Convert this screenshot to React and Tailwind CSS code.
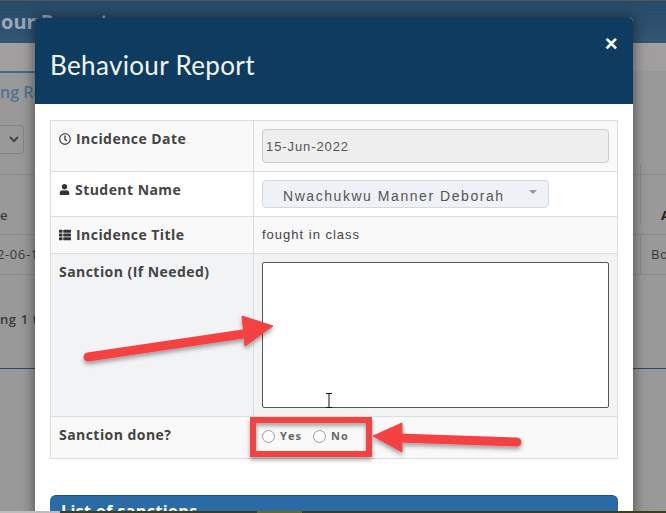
import { FaRegClock, FaUser, FaThList } from "react-icons/fa"

function Row({ label, icon, height, tone = "bg-[#f9f9f9]", children, last }) {
  return (
    <div className={`grid grid-cols-[203px_1fr] ${height} ${tone} ${last ? "" : "border-b border-[#ddd]"}`}>
      <div className="flex items-start gap-[5px] border-r border-[#ddd] pl-[8px] pt-[9px] text-[14px] font-bold leading-[18px] tracking-[0.45px] text-[#444]">
        {icon && <span className="mt-[3px] text-[#333]">{icon}</span>}
        {label}
      </div>
      <div className="pl-[8px]">{children}</div>
    </div>
  )
}

function Background() {
  return (
    <div className="flex h-full flex-col bg-[#999] text-[#3a3a3a]">
      <div className="h-px bg-[#555]" />
      <div className="flex h-[42px] items-center overflow-hidden bg-gradient-to-b from-[#264a69] to-[#335672] pl-[1px] text-[20px] font-bold text-[#9aa9b6] whitespace-nowrap">
        our Report
      </div>
      <div className="h-[28px] bg-[#a09e9e]" />
      <div className="h-[2px] w-[40px] bg-[#3d6a8e]" />
      <div className="h-[30px] overflow-hidden pl-0 pt-[10px] text-[16px] font-semibold leading-[18px] text-[#4f7391] whitespace-nowrap">
        ng Re
      </div>
      <div className="flex h-[72px] items-start border-b border-[#8a8a8a] pt-[22px]">
        <div className="flex h-[29px] w-[24px] items-center justify-end rounded-r border border-l-0 border-[#858585] pr-[4px]">
          <svg width="10" height="7" viewBox="0 0 10 7" fill="none" stroke="#444" strokeWidth="2">
            <path d="M1 1l4 4 4-4" />
          </svg>
        </div>
      </div>
      <div className="flex h-[60px] items-end justify-between border-b border-[#8a8a8a] pb-[10px] text-[13px] font-semibold leading-[18px]">
        <span>e</span>
        <span className="flex h-[59px] w-[26px] items-end border-l border-[#8a8a8a] pl-[20px] font-bold text-[#222]">A</span>
      </div>
      <div className="flex h-[40px] items-center justify-between border-b border-[#8a8a8a] text-[13px] tracking-[0.6px]">
        <span className="-ml-[3px]">2-06-1</span>
        <span className="flex h-full w-[26px] items-center overflow-hidden border-l border-[#8a8a8a] pl-[10px]">Bo</span>
      </div>
      <div className="h-[94px] border-b border-[#2e4a60] pt-[35px] text-[13px] font-semibold leading-[18px] tracking-[0.6px]">
        ng 1 t
      </div>
    </div>
  )
}

export default function App() {
  return (
    <div className="relative h-[513px] w-[666px] overflow-hidden font-['Open_Sans',sans-serif]">
      <Background />

      {/* Modal */}
      <div className="absolute left-[35px] top-[18px] h-[500px] w-[598px] rounded-t bg-white shadow-[0_0_14px_rgba(0,0,0,0.55)]">
        <div className="relative h-[86px] rounded-t bg-[#0e3c60] pl-[15px] pt-[31px] font-['Lato',sans-serif] text-[26px] leading-[33px] tracking-[0.35px] text-[#f2f6f9]">
          Behaviour Report
          <span className="absolute right-[15px] top-[13px] font-['Liberation_Sans',sans-serif] text-[22px] font-bold leading-[26px] text-white">×</span>
        </div>
        <div className="px-[15px] pt-[16px]">
          <div className="border border-[#ddd]">
            <Row label="Incidence Date" icon={<FaRegClock size={12} />} height="h-[51px]">
              <input
                readOnly
                value="15-Jun-2022"
                className="mt-[8px] h-[34px] w-[347px] rounded border border-[#ccc] bg-[#eee] px-[3px] font-['Liberation_Sans',sans-serif] text-[13px] tracking-[0.9px] text-[#555]"
              />
            </Row>
            <Row label="Student Name" icon={<FaUser size={11} />} height="h-[45px]" tone="bg-white">
              <div className="mt-[8px] flex h-[28px] w-[287px] items-center justify-between rounded border border-[#d2d7e0] bg-[#eef1f6] pl-[20px] pr-[11px] pt-[5px] font-['Liberation_Sans',sans-serif] text-[14px] tracking-[1.55px] text-[#555]">
                Nwachukwu Manner Deborah
                <span className="mb-[9px] h-0 w-0 border-x-[4px] border-t-[4px] border-x-transparent border-t-[#999]" />
              </div>
            </Row>
            <Row label="Incidence Title" icon={<FaThList size={12} />} height="h-[37px]">
              <div className="pt-[10px] font-['Liberation_Sans',sans-serif] text-[13px] leading-[16px] tracking-[1px] text-[#444]">
                fought in class
              </div>
            </Row>
            <Row label="Sanction (If Needed)" height="h-[163px]" tone="bg-[#f2f3f5]">
              <textarea className="mt-[8px] block h-[146px] w-[347px] resize-none rounded-[2px] border border-[#555] bg-white" />
            </Row>
            <Row label="Sanction done?" height="h-[41px]" last>
              <div className="flex items-center pt-[11px] text-[11px] font-bold leading-[16px] tracking-[1.05px] text-[#666]">
                <input type="radio" name="done" className="m-0 mr-[5px] h-[13px] w-[13px] opacity-70" />
                Yes
                <input type="radio" name="done" className="m-0 ml-[11px] mr-[5px] h-[13px] w-[13px] opacity-70" />
                No
              </div>
            </Row>
          </div>
          <div className="mt-[36px] h-[40px] rounded-t-md border-t border-[#1d4f7d] bg-[#2a6aa5] pl-[11px] pt-[4px] text-[16px] font-bold leading-[22px] tracking-[0.4px] text-white">
            List of sanctions
          </div>
        </div>
      </div>

      {/* Annotations drawn over the screenshot */}
      <svg className="pointer-events-none absolute inset-0" width="666" height="513" viewBox="0 0 666 513">
        <defs>
          <filter id="shade" x="-10%" y="-30%" width="120%" height="160%">
            <feDropShadow dx="0" dy="3" stdDeviation="2" floodColor="#000" floodOpacity="0.35" />
          </filter>
        </defs>
        <g filter="url(#shade)" fill="#f44343" stroke="#f44343">
          <path d="M88 357L250 333" strokeWidth="9" strokeLinecap="round" fill="none" />
          <path d="M242 316L273 326L245 346Z" strokeWidth="1" />
          <path d="M398 438L517 442" strokeWidth="9" strokeLinecap="round" fill="none" />
          <path d="M373 436L402 423L402 452Z" strokeWidth="1" />
          <rect x="253" y="420" width="116" height="34" strokeWidth="6" fill="none" />
        </g>
        <path d="M326 393.5h6M329 393.5v14M326 407.5h6" stroke="#111" strokeWidth="1" fill="none" />
      </svg>

      {/* Edge of the next window at the very bottom of the capture */}
      <div className="absolute inset-x-0 bottom-0 flex h-[2px] bg-[#3d3d20]">
        <div className="w-[60px] bg-[#bdbdbd]" />
        <div className="ml-[197px] w-[45px] bg-[#6b6a22]" />
      </div>
    </div>
  )
}
